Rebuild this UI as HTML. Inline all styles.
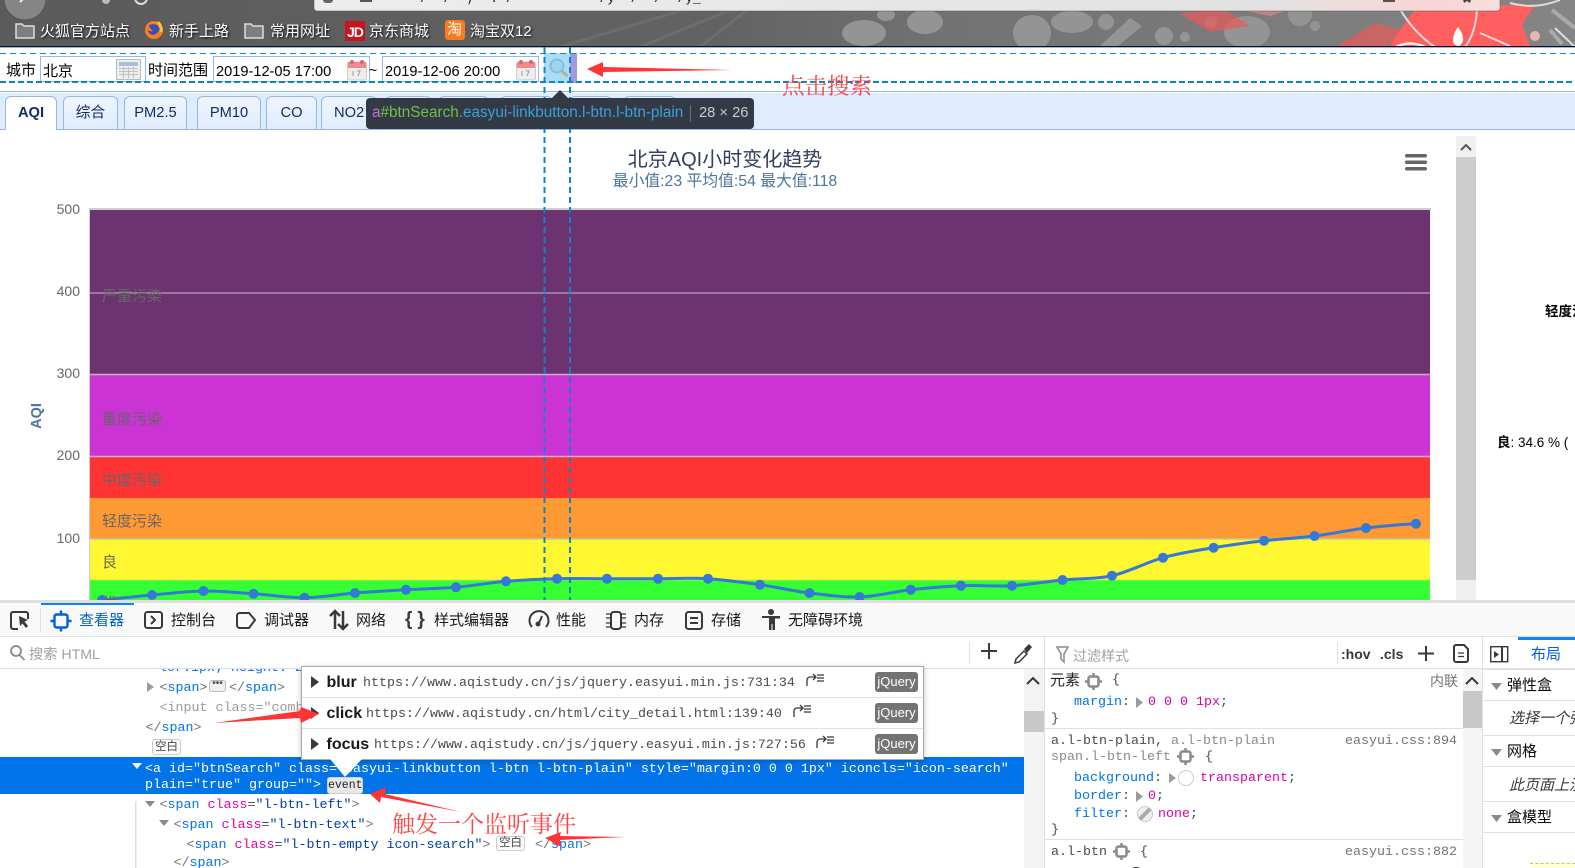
<!DOCTYPE html>
<html lang="zh"><head><meta charset="utf-8"><title>AQI</title>
<style>
html,body{margin:0;padding:0;width:1575px;height:868px;overflow:hidden;background:#fff}
body{position:relative;font-family:"Liberation Sans","Noto Sans CJK SC",sans-serif;font-size:14px;color:#000}
.a{position:absolute}
.t{position:absolute;white-space:nowrap;line-height:20px;height:20px}
.m{position:absolute;white-space:pre;line-height:20px;height:20px;font-family:"Liberation Mono","Noto Sans CJK SC",monospace;font-size:13.33px;color:#4a4a4f}
.b{color:#0074e8}.p{color:#dd00a9}.v{color:#003eaa}.g{color:#737373}
svg{position:absolute;overflow:visible}
.bm{color:#fff;font-size:15px;text-shadow:1px 1px 2px #000}
.inp{position:absolute;top:56px;height:24px;border:1px solid #95b8e7;background:#fff}
.tab{position:absolute;top:96px;height:33px;box-sizing:border-box;border:1px solid #95b8e7;border-bottom:0;border-radius:6px 6px 0 0;background:linear-gradient(#eff5ff,#e0ecff);text-align:center;line-height:32px;font-size:14.7px;color:#0e2d5f}
.dev{font-size:15px;color:#18191a}
.jq{position:absolute;left:875px;width:43px;height:20px;border-radius:3px;background:#737373;color:#fff;font-size:13px;line-height:20px;text-align:center}
.ev{font-size:16px;font-weight:bold;color:#18191a}
.hd{font-size:15px;color:#0c0c0d}
.it{font-style:italic;font-size:15px;color:#38383d}
.red{position:absolute;white-space:nowrap;font-family:"Liberation Serif","Noto Serif CJK SC",serif;color:#ff4444;font-size:22.5px;line-height:28px}
.ln{position:absolute;height:1px;background:#e0e0e2}
</style></head><body>

<!-- browser chrome -->
<svg width="1575" height="47" style="left:0;top:0">
<defs><linearGradient id="bg" x1="0" x2="1" y1="0" y2="0"><stop offset="0" stop-color="#5b5b5b"/><stop offset=".45" stop-color="#626262"/><stop offset=".6" stop-color="#727272"/><stop offset="1" stop-color="#858585"/></linearGradient>
<linearGradient id="ab" x1="0" x2="1" y1="0" y2="0"><stop offset="0" stop-color="#ededed"/><stop offset=".8" stop-color="#e2e2e2"/><stop offset=".95" stop-color="#fbd5d5"/><stop offset="1" stop-color="#f7dede"/></linearGradient></defs>
<rect width="1575" height="47" fill="url(#bg)"/>
<path d="M700 47L760 0M640 47L730 10M560 47L700 5" stroke="#777" stroke-width="3" fill="none" opacity=".5"/>
<g fill="#949494">
<ellipse cx="864" cy="33" rx="22" ry="13"/><ellipse cx="886" cy="15" rx="9" ry="6"/><ellipse cx="925" cy="22" rx="18" ry="12"/>
<ellipse cx="1032" cy="33" rx="19" ry="18"/><ellipse cx="1072" cy="22" rx="21" ry="11"/><circle cx="1106" cy="22" r="8"/>
<path d="M1100 46L1130 18l12 8-24 20z"/><circle cx="1164" cy="36" r="9"/><circle cx="1185" cy="37" r="5"/><circle cx="1211" cy="22" r="6"/>
<ellipse cx="1247" cy="32" rx="23" ry="16"/><circle cx="1315" cy="26" r="5"/><circle cx="1300" cy="14" r="12"/></g>
<path d="M1180 14l40-8 30 20-40 6zM1335 47l40-24 30 8-20 16z" fill="#e85a5a" opacity=".7"/>
<path d="M1418 5H1535L1522 25 1530 46H1390L1400 30z" fill="#ff5f5f"/>
<path d="M1230 8L1260 0 1300 6 1270 16z" fill="#e88" opacity=".6"/>
<path d="M1395 0Q1410 30 1435 47M1477 0Q1478 30 1465 47M1480 33L1510 46M1560 0Q1535 10 1510 3M1555 28L1575 47" stroke="#ededed" stroke-width="2" fill="none" opacity=".85"/>
<path d="M1396 47Q1410 40 1425 47" stroke="#eee" stroke-width="2.5" fill="none"/>
<path d="M1458 27q6 8 5 14-2 5-5 5-5-1-5-6 0-6 5-13z" fill="#fff"/>
<circle cx="1535" cy="36" r="5" fill="#e9b4b4"/>
<path d="M1550 30l12 14M1552 10l23 18" stroke="#aaa" stroke-width="4" fill="none"/>
<circle cx="25" cy="-1" r="21" fill="#858585" stroke="#555"/>
<path d="M20 2l5-5" stroke="#eee" stroke-width="2"/><circle cx="106" cy="0" r="4" fill="#bbb"/><path d="M135 -2a6 6 0 0 0 12 0" stroke="#ddd" stroke-width="2" fill="none"/>
<rect x="314" y="-6" width="1186" height="17" rx="3" fill="url(#ab)" stroke="#555" stroke-opacity=".5"/>
<rect x="323" y="-4" width="10" height="7" rx="3" fill="#666"/><rect x="360" y="-3" width="12" height="5" fill="#555"/>
<rect x="1383" y="-3" width="12" height="5" fill="#555"/><path d="M1462 -4l10 0 -2 7-3-2-3 2z" fill="#444"/>
<rect y="46" width="1575" height="1" fill="#111"/>
</svg>
<div class="m" style="left:420px;top:-11px;color:#222;font-size:13px">/  /  ,  . /           /y  /  /  /y_</div>

<!-- bookmarks -->
<svg width="540" height="30" style="left:0;top:18px">
<g fill="#7e7e7e" stroke="#ddd" stroke-width="1.5"><path d="M16 6h6l2 2h10v12H16z"/><path d="M245 6h6l2 2h10v12h-18z"/></g>
<circle cx="154" cy="12" r="9" fill="#ff7b1c"/><path d="M149 7q8-3 11 4-2 5-7 6-5-1-5-5 3 2 5 1-4-3-4-6z" fill="#3a4fb5"/><path d="M158 4q4 5 3 10" stroke="#ffc62d" stroke-width="3" fill="none"/>
<rect x="345" y="3" width="20" height="20" fill="#c8141f"/>
<rect x="445" y="2" width="20" height="20" rx="3" fill="#ff7a1f"/>
</svg>
<div class="t" style="left:347px;top:22px;color:#fff;font-weight:bold;font-size:14px;letter-spacing:-1px">JD</div>
<div class="t" style="left:447px;top:20px;color:#fff;font-size:15px">淘</div>
<div class="t bm" style="left:40px;top:22px">火狐官方站点</div>
<div class="t bm" style="left:169px;top:22px">新手上路</div>
<div class="t bm" style="left:270px;top:22px">常用网址</div>
<div class="t bm" style="left:369px;top:22px">京东商城</div>
<div class="t bm" style="left:470px;top:22px">淘宝双12</div>

<!-- search toolbar -->
<div class="a" style="left:0;top:47px;width:1575px;height:43px;box-sizing:content-box;background:#fff;border-top:1px solid #95b8e7;border-bottom:1px solid #95b8e7"></div>
<div class="a" style="left:0;top:93px;width:1575px;height:36px;background:#dfebfe;border-bottom:1px solid #95b8e7"></div>
<div class="t" style="left:6px;top:61px;font-size:15px">城市</div>
<div class="inp" style="left:40px;width:104px"></div>
<div class="t" style="left:43px;top:62px;font-size:15px">北京</div>
<svg width="26" height="22" style="left:116px;top:59px"><rect x=".5" y=".5" width="24" height="20" fill="#eee" stroke="#bbb"/><rect x="3" y="3" width="19" height="4" fill="#a9c0dc"/><path d="M3 9.5h19M3 12.5h19M3 15.5h19M7.5 8v11M12.5 8v11M17.5 8v11" stroke="#c2c2c2"/></svg>
<div class="t" style="left:148px;top:61px;font-size:15px">时间范围</div>
<div class="inp" style="left:213px;width:155px"></div>
<div class="t" style="left:216px;top:62px;font-size:14.6px">2019-12-05 17:00</div>
<div class="t" style="left:369px;top:60px;font-size:14px">~</div>
<div class="inp" style="left:382px;width:155px"></div>
<div class="t" style="left:385px;top:62px;font-size:14.6px">2019-12-06 20:00</div>
<svg width="22" height="22" style="left:347px;top:59px"><rect x=".5" y="3" width="19" height="18" rx="2" fill="#eee" stroke="#ccc"/><rect x="1" y="3" width="18" height="6" fill="#ef8b8b"/><circle cx="5" cy="3" r="2" fill="#d66"/><circle cx="15" cy="3" r="2" fill="#d66"/><path d="M6 12v5M10 12h3l-2 5" stroke="#999" fill="none"/></svg>
<svg width="22" height="22" style="left:516px;top:59px"><rect x=".5" y="3" width="19" height="18" rx="2" fill="#eee" stroke="#ccc"/><rect x="1" y="3" width="18" height="6" fill="#ef8b8b"/><circle cx="5" cy="3" r="2" fill="#d66"/><circle cx="15" cy="3" r="2" fill="#d66"/><path d="M6 12v5M10 12h3l-2 5" stroke="#999" fill="none"/></svg>
<div class="a" style="left:544px;top:53px;width:26px;height:30px;background:#aadcf3"></div>
<div class="a" style="left:570px;top:53px;width:7px;height:30px;background:#a29ae0"></div>
<svg width="24" height="24" style="left:546px;top:56px"><circle cx="11" cy="10" r="6.5" fill="#9dd4ee" stroke="#85bedb" stroke-width="2"/><path d="M15.5 15l6 5" stroke="#aab59a" stroke-width="3"/></svg>

<!-- tabs -->
<div class="tab" style="left:5px;width:52px;background:#fff;height:34px;font-weight:bold;color:#0e2d5f">AQI</div>
<div class="tab" style="left:63px;width:55px">综合</div>
<div class="tab" style="left:124px;width:63px">PM2.5</div>
<div class="tab" style="left:197px;width:64px">PM10</div>
<div class="tab" style="left:266px;width:51px">CO</div>
<div class="tab" style="left:321px;width:56px;text-align:left;padding-left:12px">NO2</div>
<div class="tab" style="left:385px;width:47px"></div>
<div class="tab" style="left:438px;width:51px"></div>
<div class="tab" style="left:500px;width:53px"></div>
<div class="tab" style="left:569px;width:43px"></div>
<div class="tab" style="left:623px;width:53px"></div>

<!-- chart -->
<div class="t" style="left:525px;width:400px;text-align:center;top:150px;font-size:20px;color:#333e5c">北京AQI小时变化趋势</div>
<div class="t" style="left:525px;width:400px;text-align:center;top:172px;font-size:15.8px;color:#4d759e">最小值:23 平均值:54 最大值:118</div>
<svg width="1575" height="600" style="left:0;top:0">
<rect x="89" y="208" width="1342" height="2" fill="#d0d0d0"/>
<rect x="89" y="208" width="1" height="392" fill="#ccc"/>
<rect x="90" y="210" width="1340" height="165" fill="#6c3370"/>
<rect x="90" y="375" width="1340" height="82" fill="#cc33d4"/>
<rect x="90" y="457" width="1340" height="41" fill="#ff3333"/>
<rect x="90" y="498" width="1340" height="41" fill="#ff9933"/>
<rect x="90" y="539" width="1340" height="41" fill="#fff72f"/>
<rect x="90" y="580" width="1340" height="20" fill="#33ff33"/>
<g stroke="#ddd" stroke-opacity=".75" stroke-width="1.5"><path d="M90 293H1430" stroke-opacity=".55"/><path d="M90 374.5H1430M90 456.5H1430"/><path d="M90 539H1430" stroke="#c8c8a0" stroke-opacity="1"/><path d="M90 580H1430" stroke="#c8e860" stroke-opacity=".6"/></g>
<path d="M102 600C119 598.5 135 596.5 152 595S186.7 591.2 203.5 591 236.7 592.6 253.5 593.7 287.7 597.8 304.5 597.7 338.2 594.3 355 593 389.2 590.65 406 589.7 439.2 588.7 456 587.3 489.2 582.7 506 581.3 540.2 579.1 557 578.7 590.2 578.7 607 578.7 641.2 578.7 658 578.7 691.2 577.7 708 578.7 743.2 582.3 760 584.7 792.7 591 809.5 593 842.8 597.5 859.6 597 894 591.6 910.8 589.7 944.2 586.4 961 585.7 995.2 586.6 1012 585.7 1045.7 581.7 1062.5 580 1095.2 579.4 1112 575.7 1146.2 562.4 1163 557.7 1196.8 550.5 1213.6 547.7 1247.2 542.6 1264 540.7 1297.7 538.1 1314.5 536 1349.2 530 1366 528 1399.2 524.5 1416 523.7" fill="none" stroke="#3479d6" stroke-width="3"/>
<g fill="#3479d6"><circle cx="102" cy="600" r="5"/><circle cx="152" cy="595" r="5"/><circle cx="203.5" cy="591" r="5"/><circle cx="253.5" cy="593.7" r="5"/><circle cx="304.5" cy="597.7" r="5"/><circle cx="355" cy="593" r="5"/><circle cx="406" cy="589.7" r="5"/><circle cx="456" cy="587.3" r="5"/><circle cx="506" cy="581.3" r="5"/><circle cx="557" cy="578.7" r="5"/><circle cx="607" cy="578.7" r="5"/><circle cx="658" cy="578.7" r="5"/><circle cx="708" cy="578.7" r="5"/><circle cx="760" cy="584.7" r="5"/><circle cx="809.5" cy="593" r="5"/><circle cx="859.6" cy="597" r="5"/><circle cx="910.8" cy="589.7" r="5"/><circle cx="961" cy="585.7" r="5"/><circle cx="1012" cy="585.7" r="5"/><circle cx="1062.5" cy="580" r="5"/><circle cx="1112" cy="575.7" r="5"/><circle cx="1163" cy="557.7" r="5"/><circle cx="1213.6" cy="547.7" r="5"/><circle cx="1264" cy="540.7" r="5"/><circle cx="1314.5" cy="536" r="5"/><circle cx="1366" cy="528" r="5"/><circle cx="1416" cy="523.7" r="5"/></g>
<g fill="#666"><rect x="1405" y="154" width="22" height="3.5" rx="1.7"/><rect x="1405" y="160.5" width="22" height="3.5" rx="1.7"/><rect x="1405" y="167" width="22" height="3.5" rx="1.7"/></g>
<rect x="1456" y="136" width="20" height="21" fill="#f0f0f0"/><path d="M1461 150l5-5 5 5" stroke="#555" stroke-width="2" fill="none"/>
<rect x="1456" y="157" width="20" height="423" fill="#cdcdcd"/><rect x="1456" y="580" width="20" height="20" fill="#efefef"/>
</svg>
<div class="t" style="left:39px;width:41px;text-align:right;top:199px;color:#666;font-size:14px">500</div>
<div class="t" style="left:39px;width:41px;text-align:right;top:281px;color:#666;font-size:14px">400</div>
<div class="t" style="left:39px;width:41px;text-align:right;top:363px;color:#666;font-size:14px">300</div>
<div class="t" style="left:39px;width:41px;text-align:right;top:445px;color:#666;font-size:14px">200</div>
<div class="t" style="left:39px;width:41px;text-align:right;top:528px;color:#666;font-size:14px">100</div>
<div class="t" style="left:17px;top:406px;width:40px;text-align:center;transform:rotate(-90deg);font-weight:bold;color:#4d759e;font-size:14.5px">AQI</div>
<div class="t" style="left:102px;top:287px;color:#666;font-size:15px">严重污染</div>
<div class="t" style="left:102px;top:410px;color:#666;font-size:15px">重度污染</div>
<div class="t" style="left:102px;top:471px;color:#666;font-size:15px">中度污染</div>
<div class="t" style="left:102px;top:512px;color:#666;font-size:15px">轻度污染</div>
<div class="t" style="left:102px;top:553px;color:#666;font-size:15px">良</div>
<div class="t" style="left:102px;top:594px;color:#666;font-size:15px">优</div>
<div class="t" style="left:1545px;top:302px;font-weight:bold;font-size:13.5px">轻度污染</div>
<div class="t" style="left:1497px;top:433px;font-size:13.5px"><b>良</b>: 34.6 % (</div>

<!-- highlighter guides -->
<svg width="1575" height="603" style="left:0;top:0">
<path d="M0 53.5H1575" stroke="#0b84c9" stroke-width="1" stroke-dasharray="6 4" fill="none"/>
<path d="M0 82H1575" stroke="#0b84c9" stroke-width="2" stroke-dasharray="6 3" fill="none"/>
<path d="M544.5 47V600M570 47V600" stroke="#0b84c9" stroke-width="2" stroke-dasharray="6 4" fill="none"/>
<path d="M587 69L603 62 603 67 732 70 603 72 603 77Z" fill="#ff3535"/>
<path d="M552 98L560 90 568 98Z" fill="#333a45"/>
</svg>
<div class="a" style="left:366px;top:98px;width:388px;height:31px;background:#333a45;border-radius:4px"></div>
<div class="t" style="left:372px;top:103px;font-size:15.3px;color:#39a1d8"><span style="color:#c56fd8">a</span><span style="color:#6fbf4c">#btnSearch</span>.easyui-linkbutton.l-btn.l-btn-plain</div>
<div class="a" style="left:690px;top:105px;width:1px;height:17px;background:#6a6f78"></div>
<div class="t" style="left:699px;top:103px;font-size:14.7px;color:#c8ccd2">28 × 26</div>
<div class="red" style="left:782px;top:73px;font-size:22.5px">点击搜索</div>

<!-- devtools base -->
<div class="a" style="left:0;top:600px;width:1575px;height:268px;background:#fff"></div>
<div class="a" style="left:0;top:600px;width:1575px;height:3px;background:#e0e0e1"></div>

<!-- markup -->
<div class="m" style="left:159px;top:659px;color:#0074e8">lor:1px; height: 2</div>
<div class="a" style="left:0;top:637px;width:1575px;height:32px;background:#fff;border-bottom:1px solid #e0e0e2;box-sizing:border-box"></div>
<div class="a" style="left:0;top:603px;width:1575px;height:34px;background:#f9f9fa;border-bottom:1px solid #e0e0e2;box-sizing:border-box"></div>
<div class="a" style="left:41px;top:603px;width:93px;height:2px;background:#0a84ff"></div>
<div class="a" style="left:40px;top:608px;width:1px;height:24px;background:#e0e0e2"></div>

<!-- toolbar icons -->
<svg width="900" height="34" style="left:0;top:603px">
<g fill="none" stroke="#38383d" stroke-width="2">
<path d="M28 16V11a2 2 0 0 0-2-2H13a2 2 0 0 0-2 2v13a2 2 0 0 0 2 2h5"/>
<rect x="145" y="9" width="17" height="16" rx="2.5"/><path d="M151 13l4 4-4 4"/>
<path d="M240 10h9l6 7-6 8h-9a3 3 0 0 1-3-3v-9a3 3 0 0 1 3-3z"/>
<path d="M335 26V8M330 13l5-5 5 5M343 8v18M338 21l5 5 5-5" stroke-width="2.5"/>
<path d="M532 24a9.5 9.5 0 1 1 14 0"/>
<rect x="611" y="9" width="10" height="17" rx="3"/><path d="M606 11h5M606 15h5M606 20h5M606 24h5M621 11h5M621 15h5M621 20h5M621 24h5" stroke-width="1.3"/>
<rect x="686" y="9" width="16" height="17" rx="2.5"/><path d="M690 15h8M690 20h8"/>
</g>
<path d="M19 13l9 4-3.5 1.5 3.5 4.5-2 2-3.5-4.500L20 23z" fill="#38383d"/>
<g fill="none" stroke="#0060df" stroke-width="2.4"><rect x="54.500" y="11.500" width="13" height="13" rx="2"/><path d="M61 7.500v4M61 24.500v4M50.500 18h4M67.500 18h4"/></g>
<circle cx="538" cy="21" r="2.500" fill="#38383d"/><path d="M539 20l3-7" stroke="#38383d" stroke-width="2"/>
<circle cx="771" cy="9" r="3" fill="#38383d"/><path d="M762 13h18v2.500h-5V20v7h-2.500v-6h-1v6H769v-12h-7z" fill="#38383d"/>
</svg>
<div class="t" style="left:405px;top:610px;font-size:19px;font-weight:bold;color:#38383d;letter-spacing:5px">{}</div>
<div class="t dev" style="left:79px;top:611px;color:#0060df">查看器</div>
<div class="t dev" style="left:171px;top:611px">控制台</div>
<div class="t dev" style="left:264px;top:611px">调试器</div>
<div class="t dev" style="left:356px;top:611px">网络</div>
<div class="t dev" style="left:434px;top:611px">样式编辑器</div>
<div class="t dev" style="left:556px;top:611px">性能</div>
<div class="t dev" style="left:634px;top:611px">内存</div>
<div class="t dev" style="left:711px;top:611px">存储</div>
<div class="t dev" style="left:788px;top:611px">无障碍环境</div>

<!-- search row -->
<svg width="30" height="22" style="left:9px;top:644px"><circle cx="7" cy="7" r="5" fill="none" stroke="#8a8a8a" stroke-width="1.800"/><path d="M10.500 11l5 5" stroke="#8a8a8a" stroke-width="1.800"/></svg>
<div class="t" style="left:29px;top:645px;color:#a0a0a0;font-size:14.2px">搜索 HTML</div>
<div class="a" style="left:969px;top:642px;width:1px;height:22px;background:#e0e0e2"></div>
<svg width="60" height="30" style="left:978px;top:638px"><path d="M11 5v16M3 13h16" stroke="#38383d" stroke-width="2" fill="none"/><path d="M38 21l8-8 3 3-8 8-4 1z" fill="#fff" stroke="#38383d" stroke-width="1.500"/><path d="M46 11l5-5 3 3-5 6z" fill="#38383d"/></svg>
<div class="a" style="left:1044px;top:637px;width:1px;height:231px;background:#e0e0e2"></div>
<div class="a" style="left:1482px;top:637px;width:1px;height:231px;background:#e0e0e2"></div>
<svg width="16" height="20" style="left:1056px;top:646px"><path d="M1 1h11L8 8v8L5 13V8z" fill="none" stroke="#8a8a8a" stroke-width="1.500"/></svg>
<div class="t" style="left:1073px;top:646px;color:#a0a0a0;font-size:14px">过滤样式</div>
<div class="a" style="left:1337px;top:642px;width:1px;height:22px;background:#e0e0e2"></div>
<div class="t" style="left:1341px;top:644px;color:#38383d;font-weight:bold;font-size:14px">:hov</div>
<div class="t" style="left:1380px;top:644px;color:#38383d;font-weight:bold;font-size:14px">.cls</div>
<svg width="60" height="26" style="left:1418px;top:645px"><path d="M8 1v15M0 8.500h16" stroke="#38383d" stroke-width="2" fill="none"/><path d="M38 0h8l4 4v11a2 2 0 0 1-2 2H38a2 2 0 0 1-2-2V2a2 2 0 0 1 2-2z" fill="none" stroke="#38383d" stroke-width="2"/><path d="M40 8h6M40 11.500h6" stroke="#38383d" stroke-width="1.300"/></svg>
<svg width="20" height="18" style="left:1490px;top:646px"><rect x=".700" y=".700" width="17" height="15" fill="none" stroke="#38383d" stroke-width="1.400"/><rect x="11" y="1" width="2" height="15" fill="#38383d"/><path d="M4 5l5 3.500-5 3.500z" fill="#38383d"/></svg>
<div class="a" style="left:1518px;top:637px;width:57px;height:3px;background:#0a84ff"></div>
<div class="t" style="left:1531px;top:645px;color:#0060df;font-size:15px">布局</div>

<!-- markup content -->
<svg width="160" height="200" style="left:0;top:669px"><path d="M147 13l7 5-7 5z" fill="#9b9b9b"/><path d="M145 132l10 0-5 6z M159 151l10 0-5 6z" fill="#8a8a8a"/><rect x="135" y="132" width="1.500" height="70" fill="#ddd"/></svg>
<div class="m" style="left:159.500px;top:679px"><span class="g">&lt;</span><span class="b">span</span><span class="g">&gt;</span></div>
<div class="a" style="left:209px;top:680px;width:15px;height:10px;border:1px solid #bbb;border-radius:3px;background:#f0f0f0;font-size:10px;line-height:6px;text-align:center;font-weight:bold;color:#555">•••</div>
<div class="m" style="left:229px;top:679px"><span class="g">&lt;/</span><span class="b">span</span><span class="g">&gt;</span></div>
<div class="m" style="left:159.500px;top:699px;color:#9b9b9b">&lt;input class="comb</div>
<div class="m" style="left:145.500px;top:719px"><span class="g">&lt;/</span><span class="b">span</span><span class="g">&gt;</span></div>
<div class="a" style="left:152px;top:739px;width:27px;height:14px;border:1px solid #ccc;border-radius:3px;background:#f9f9fa;font-size:11.500px;line-height:14px;text-align:center;color:#444">空白</div>

<div class="a" style="left:0;top:757px;width:1024px;height:37px;background:#0074e8"></div>
<svg width="14" height="10" style="left:131px;top:762px"><path d="M1 1h10L6 7z" fill="#fff"/></svg>
<div class="m" style="left:145px;top:760px;color:#fff">&lt;a id="btnSearch" class="easyui-linkbutton l-btn l-btn-plain" style="margin:0 0 0 1px" iconcls="icon-search"</div>
<div class="m" style="left:145px;top:776px;color:#fff">plain="true" group=""&gt;</div>
<div class="a" style="left:327px;top:777px;width:36px;height:17px;border-radius:3px;background:#e8e8e8;border:1px solid #d0d0d0;box-sizing:border-box;color:#222;font-family:'Liberation Mono',monospace;font-size:11.500px;line-height:15px;text-align:center">event</div>

<div class="m" style="left:159.500px;top:796px"><span class="g">&lt;</span><span class="b">span</span> <span class="p">class</span>=<span class="v">"l-btn-left"</span><span class="g">&gt;</span></div>
<div class="m" style="left:173.500px;top:816px"><span class="g">&lt;</span><span class="b">span</span> <span class="p">class</span>=<span class="v">"l-btn-text"</span><span class="g">&gt;</span></div>
<div class="m" style="left:186.500px;top:836px"><span class="g">&lt;</span><span class="b">span</span> <span class="p">class</span>=<span class="v">"l-btn-empty icon-search"</span><span class="g">&gt;</span></div>
<div class="a" style="left:496px;top:836px;width:27px;height:13px;border:1px solid #ccc;border-radius:3px;background:#f9f9fa;font-size:11.500px;line-height:13px;text-align:center;color:#444">空白</div>
<div class="m" style="left:535px;top:836px"><span class="g">&lt;/</span><span class="b">span</span><span class="g">&gt;</span></div>
<div class="m" style="left:173.500px;top:854px"><span class="g">&lt;/</span><span class="b">span</span><span class="g">&gt;</span></div>

<!-- markup scrollbar -->
<div class="a" style="left:1024px;top:669px;width:20px;height:199px;background:#f3f3f3"></div>
<div class="a" style="left:1024px;top:711px;width:20px;height:21px;background:#c8c8c8"></div>
<svg width="20" height="12" style="left:1025px;top:675px"><path d="M2 9l6-6 6 6" fill="none" stroke="#38383d" stroke-width="2"/></svg>

<!-- event popup -->
<div class="a" style="left:301px;top:666px;width:621px;height:92px;background:#fff;border:1px solid #aaa;box-shadow:0 1px 5px rgba(0,0,0,.25)"></div>
<div class="ln" style="left:302px;top:697px;width:621px"></div>
<div class="ln" style="left:302px;top:728px;width:621px"></div>
<svg width="620" height="120" style="left:305px;top:660px">
<path d="M25 99L40 117 57 99Z" fill="#fff"/>
<g fill="#38383d"><path d="M6 16l8 6-8 6z"/><path d="M6 47l8 6-8 6z"/><path d="M6 78l8 6-8 6z"/></g>
<g fill="none" stroke="#38383d" stroke-width="1.300" transform="translate(5 1)"><path d="M497 25v-6a3 3 0 0 1 3-3h6M503 13l3 3-3 3M507 14h7M507 17h7M507 20h7"/><path d="M484 56v-6a3 3 0 0 1 3-3h6M490 44l3 3-3 3M494 45h7M494 48h7M494 51h7"/><path d="M507 87v-6a3 3 0 0 1 3-3h6M513 75l3 3-3 3M517 76h7M517 79h7M517 82h7"/></g>
</svg>
<div class="t ev" style="left:326.500px;top:673px">blur</div>
<div class="m" style="left:363px;top:674px">https://www.aqistudy.cn/js/jquery.easyui.min.js:731:34</div>
<div class="t ev" style="left:326.500px;top:704px">click</div>
<div class="m" style="left:366px;top:705px">https://www.aqistudy.cn/html/city_detail.html:139:40</div>
<div class="t ev" style="left:326.500px;top:735px">focus</div>
<div class="m" style="left:374px;top:736px">https://www.aqistudy.cn/js/jquery.easyui.min.js:727:56</div>
<div class="jq" style="top:672px">jQuery</div>
<div class="jq" style="top:703px">jQuery</div>
<div class="jq" style="top:734px">jQuery</div>

<!-- rules panel -->
<div class="t" style="left:1050px;top:671px;font-size:15px;color:#222">元素</div>
<div class="m" style="left:1112px;top:671px">{</div>
<div class="t" style="left:1430px;top:671px;font-size:14px;color:#737373">内联</div>
<div class="m" style="left:1074px;top:693px"><span class="b">margin</span>:</div>
<svg width="10" height="12" style="left:1136px;top:697px"><path d="M0 0l7 5.500-7 5.500z" fill="#9b9b9b"/></svg>
<div class="m" style="left:1148px;top:693px"><span class="p">0 0 0 1px</span>;</div>
<div class="m" style="left:1051px;top:710px">}</div>
<div class="ln" style="left:1045px;top:728px;width:418px"></div>
<div class="m" style="left:1051px;top:732px">a.l-btn-plain, <span style="color:#8a8a8a">a.l-btn-plain</span></div>
<div class="m" style="left:1251px;top:732px;width:206px;text-align:right;color:#737373">easyui.css:894</div>
<div class="m" style="left:1051px;top:748px;color:#8a8a8a">span.l-btn-left</div>
<div class="m" style="left:1205px;top:748px">{</div>
<div class="m" style="left:1074px;top:769px"><span class="b">background</span>:</div>
<svg width="12" height="12" style="left:1168px;top:772px"><path d="M1 1l7 5-7 5z" fill="#9b9b9b"/></svg>
<svg width="18" height="18" style="left:1178px;top:770px"><circle cx="8" cy="8" r="7.500" fill="#fff" stroke="#ccc"/></svg>
<div class="m" style="left:1200px;top:769px"><span class="p">transparent</span>;</div>
<div class="m" style="left:1074px;top:787px"><span class="b">border</span>:</div>
<svg width="10" height="12" style="left:1136px;top:791px"><path d="M0 0l7 5.500-7 5.500z" fill="#9b9b9b"/></svg>
<div class="m" style="left:1148px;top:787px"><span class="p">0</span>;</div>
<div class="m" style="left:1074px;top:805px"><span class="b">filter</span>:</div>
<svg width="18" height="18" style="left:1137px;top:806px"><circle cx="8" cy="8" r="7.500" fill="#f0f0f0" stroke="#ccc"/><path d="M3 13L13 3" stroke="#aaa" stroke-width="4"/></svg>
<div class="m" style="left:1158px;top:805px"><span class="p">none</span>;</div>
<div class="m" style="left:1051px;top:821px">}</div>
<div class="ln" style="left:1045px;top:839px;width:418px"></div>
<div class="m" style="left:1051px;top:843px">a.l-btn</div>
<div class="m" style="left:1140px;top:843px">{</div>
<div class="m" style="left:1251px;top:843px;width:206px;text-align:right;color:#737373">easyui.css:882</div>
<div class="m" style="left:1074px;top:866px"><span class="b">color</span>: </div>
<svg width="20" height="10" style="left:1129px;top:866px"><circle cx="7" cy="8" r="7" fill="#333"/></svg>
<div class="m" style="left:1150px;top:866px;color:#dd00a9">#444</div>
<svg width="200" height="190" style="left:1040px;top:669px"><g fill="none" stroke="#8a8a8a" stroke-width="2.500">
<g transform="translate(4 0)"><rect x="44.500" y="7.500" width="10" height="10" rx="2"/><path d="M49.500 4v3M49.500 18v3M41 12.500h3M55 12.500h3"/></g>
<g transform="translate(96 75)"><rect x="44.500" y="7.500" width="10" height="10" rx="2"/><path d="M49.500 4v3M49.500 18v3M41 12.500h3M55 12.500h3"/></g>
<g transform="translate(32 170)"><rect x="44.500" y="7.500" width="10" height="10" rx="2"/><path d="M49.500 4v3M49.500 18v3M41 12.500h3M55 12.500h3"/></g></g></svg>

<!-- rules scrollbar -->
<div class="a" style="left:1463px;top:669px;width:19px;height:199px;background:#f5f5f5"></div>
<div class="a" style="left:1463px;top:691px;width:19px;height:37px;background:#c8c8c8"></div>
<svg width="20" height="12" style="left:1464px;top:675px"><path d="M2 9l6-6 6 6" fill="none" stroke="#38383d" stroke-width="2"/></svg>

<!-- layout panel -->
<div class="ln" style="left:1483px;top:669px;width:92px"></div>
<svg width="14" height="160" style="left:1491px;top:681px"><path d="M0 2h11L5.500 9zM0 68h11L5.500 75zM0 134h11L5.500 141z" fill="#8a8a8a"/></svg>
<div class="t hd" style="left:1507px;top:676px">弹性盒</div>
<div class="ln" style="left:1483px;top:700px;width:92px"></div>
<div class="t it" style="left:1509px;top:709px">选择一个弹性</div>
<div class="ln" style="left:1483px;top:735px;width:92px"></div>
<div class="t hd" style="left:1507px;top:742px">网格</div>
<div class="ln" style="left:1483px;top:766px;width:92px"></div>
<div class="t it" style="left:1509px;top:776px">此页面上没有</div>
<div class="ln" style="left:1483px;top:801px;width:92px"></div>
<div class="t hd" style="left:1507px;top:808px">盒模型</div>
<div class="ln" style="left:1483px;top:832px;width:92px"></div>
<div class="a" style="left:1530px;top:863px;width:45px;height:5px;background:#ffffd8;border-top:1px dashed #c8c860"></div>

<!-- annotations -->
<svg width="1575" height="868" style="left:0;top:0">
<path d="M214 723L300 711 301 707 319 714 301 723 300 718Z" fill="#ff3535"/>
<path d="M370 794L386 787 385 794 461 812 381 797 380 803Z" fill="#ff3535"/>
<path d="M545 838L561 832 560 836 625 837 560 840 561 847Z" fill="#ff3535"/>
</svg>
<div class="red" style="left:392px;top:811px;font-size:23px">触发一个监听事件</div>
</body></html>
